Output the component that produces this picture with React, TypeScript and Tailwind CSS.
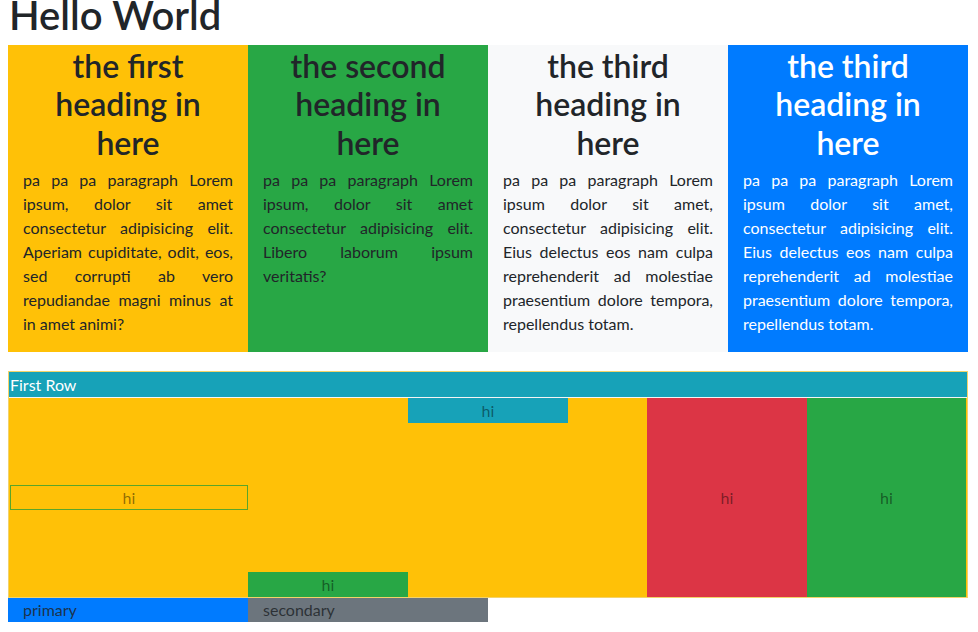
import React from "react";

type Card = {
  title: string;
  body: string;
  className: string;
};

const cards: Card[] = [
  {
    title: "the first heading in here",
    body: "pa pa pa paragraph Lorem ipsum, dolor sit amet consectetur adipisicing elit. Aperiam cupiditate, odit, eos, sed corrupti ab vero repudiandae magni minus at in amet animi?",
    className: "bg-[#ffc107] text-[#212529]",
  },
  {
    title: "the second heading in here",
    body: "pa pa pa paragraph Lorem ipsum, dolor sit amet consectetur adipisicing elit. Libero laborum ipsum veritatis?",
    className: "bg-[#28a745] text-[#212529]",
  },
  {
    title: "the third heading in here",
    body: "pa pa pa paragraph Lorem ipsum dolor sit amet, consectetur adipisicing elit. Eius delectus eos nam culpa reprehenderit ad molestiae praesentium dolore tempora, repellendus totam.",
    className: "bg-[#f8f9fa] text-[#212529]",
  },
  {
    title: "the third heading in here",
    body: "pa pa pa paragraph Lorem ipsum dolor sit amet, consectetur adipisicing elit. Eius delectus eos nam culpa reprehenderit ad molestiae praesentium dolore tempora, repellendus totam.",
    className: "bg-[#007bff] text-white",
  },
];

function App() {
  return (
    <div className="font-['Lato','Liberation_Sans',sans-serif] text-[#212529] bg-white min-h-screen">
      <div className="w-[960px] ml-2 -mt-[9px]">
        <h1 className="text-[40px] leading-[48px] font-semibold mb-[6px] pl-[1px]">Hello World</h1>

        <div className="grid grid-cols-4">
          {cards.map((card, i) => (
            <div key={i} className={"px-[15px] " + card.className}>
              <h2 className="text-[32px] leading-[38.4px] font-semibold text-center mb-[6px] pt-[2px]">
                {card.title}
              </h2>
              <p className="text-[16px] leading-6 text-justify mb-4">{card.body}</p>
            </div>
          ))}
        </div>

        {/* the grid playground */}
        <div className="mt-[19px] border border-[#f3d36a]">
          <div className="bg-[#17a2b8] text-white text-[16px] leading-[25px] px-[1px] border-b border-[#f4f4f4]">
            First Row
          </div>
          <div className="flex h-[199px] bg-[#ffc107] text-black/45 text-[16px]">
            <div className="w-[239px] flex items-center">
              <div className="w-full ml-[1px] h-[25px] leading-[23px] text-center border border-[#5aa52a]">hi</div>
            </div>
            <div className="w-[160px] flex items-end">
              <div className="w-full h-[25px] leading-[25px] text-center bg-[#28a745]">hi</div>
            </div>
            <div className="w-[160px] flex items-start">
              <div className="w-full h-[25px] leading-[25px] text-center bg-[#17a2b8]">hi</div>
            </div>
            <div className="w-[79px]" />
            <div className="w-[160px] flex items-center justify-center bg-[#dc3545]">hi</div>
            <div className="w-[159px] flex items-center justify-center bg-[#28a745]">hi</div>
          </div>
        </div>

        <div className="flex text-[16px] leading-6 text-[#212529]/85">
          <div className="w-[240px] px-[15px] bg-[#007bff]">primary</div>
          <div className="w-[240px] px-[15px] bg-[#6c757d]">secondary</div>
        </div>
      </div>
    </div>
  );
}

export default App;
